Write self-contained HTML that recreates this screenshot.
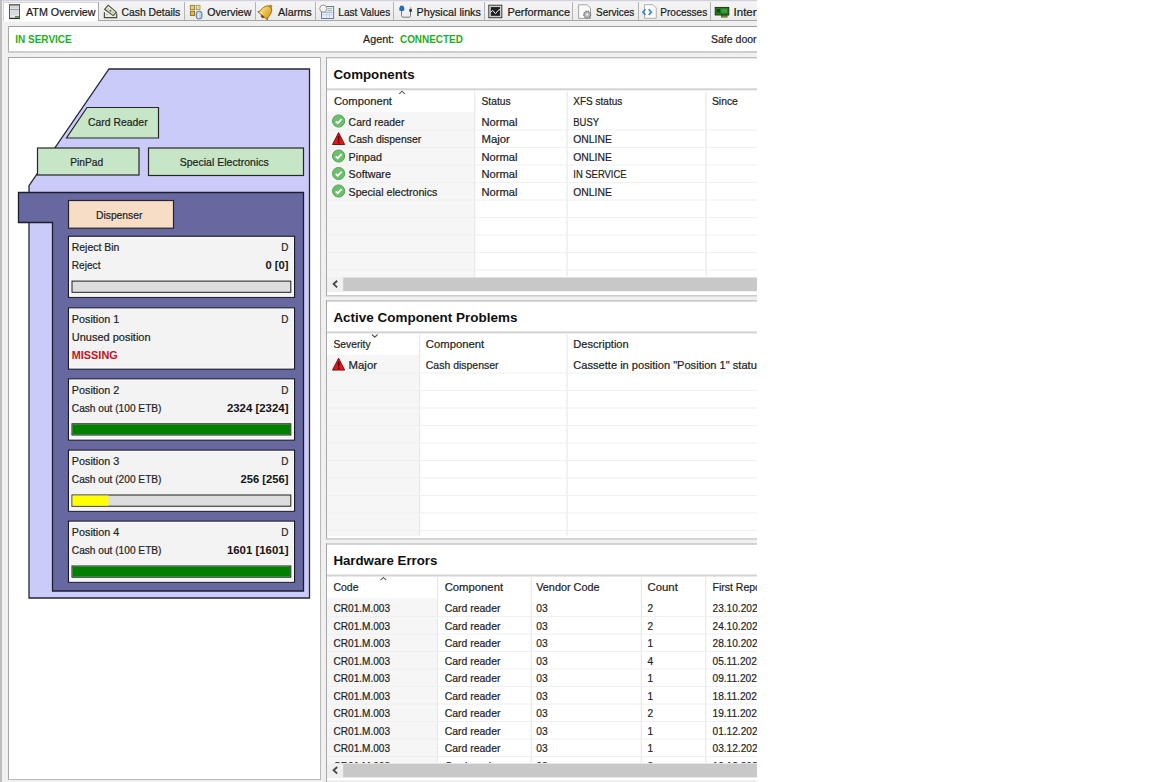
<!DOCTYPE html>
<html><head><meta charset="utf-8"><title>ATM Overview</title>
<style>
html,body{margin:0;padding:0;background:#fff}
body{width:1152px;height:782px;overflow:hidden;position:relative}
svg{position:absolute;left:0;top:0;display:block}
text{font-family:"Liberation Sans",sans-serif;white-space:pre}
</style></head><body>
<svg width="1152" height="782" viewBox="0 0 1152 782">
<defs>
<linearGradient id="bellg" x1="0" y1="0" x2="1" y2="0"><stop offset="0" stop-color="#ffe27a"/><stop offset="1" stop-color="#d9981c"/></linearGradient>
<linearGradient id="tabg" x1="0" y1="0" x2="0" y2="1"><stop offset="0" stop-color="#f5f5f5"/><stop offset="1" stop-color="#ebebeb"/></linearGradient>
<clipPath id="appclip"><rect x="0" y="0" width="757" height="782"/></clipPath>
</defs>
<g clip-path="url(#appclip)">
<rect x="0" y="0" width="1152" height="782" fill="#ffffff"/>
<rect x="0" y="0" width="757" height="782" fill="#f0f0f0"/>
<rect x="0" y="0" width="2" height="782" fill="#bebebe"/>
<rect x="2" y="0" width="755" height="1.5" fill="#d2d2dc"/>
<rect x="2" y="1.5" width="755" height="1" fill="#f8f8f8"/>
<rect x="98" y="2.5" width="659" height="18" fill="url(#tabg)"/>
<rect x="98" y="20" width="659" height="1" fill="#a5a5a5"/>
<rect x="3" y="2" width="96" height="19.5" fill="#ffffff"/>
<rect x="3" y="2" width="1" height="19" fill="#d6d6d6"/>
<rect x="3" y="2" width="96" height="1" fill="#d6d6d6"/>
<rect x="98" y="2" width="1" height="19" fill="#a8a8a8"/>
<rect x="184" y="2" width="1" height="18" fill="#b4b4b4"/>
<rect x="255" y="2" width="1" height="18" fill="#b4b4b4"/>
<rect x="315" y="2" width="1" height="18" fill="#b4b4b4"/>
<rect x="393" y="2" width="1" height="18" fill="#b4b4b4"/>
<rect x="484" y="2" width="1" height="18" fill="#b4b4b4"/>
<rect x="572" y="2" width="1" height="18" fill="#b4b4b4"/>
<rect x="638" y="2" width="1" height="18" fill="#b4b4b4"/>
<rect x="710" y="2" width="1" height="18" fill="#b4b4b4"/>
<text x="26.00" y="15.60" font-size="11.5" stroke="#1a1a1a" stroke-width="0.22" fill="#1a1a1a" textLength="69.50" lengthAdjust="spacingAndGlyphs">ATM Overview</text>
<text x="121.50" y="15.60" font-size="11.5" stroke="#1a1a1a" stroke-width="0.22" fill="#1a1a1a" textLength="58.80" lengthAdjust="spacingAndGlyphs">Cash Details</text>
<text x="207.20" y="15.60" font-size="11.5" stroke="#1a1a1a" stroke-width="0.22" fill="#1a1a1a" textLength="44.20" lengthAdjust="spacingAndGlyphs">Overview</text>
<text x="278.00" y="15.60" font-size="11.5" stroke="#1a1a1a" stroke-width="0.22" fill="#1a1a1a" textLength="33.70" lengthAdjust="spacingAndGlyphs">Alarms</text>
<text x="338.30" y="15.60" font-size="11.5" stroke="#1a1a1a" stroke-width="0.22" fill="#1a1a1a" textLength="51.90" lengthAdjust="spacingAndGlyphs">Last Values</text>
<text x="416.60" y="15.60" font-size="11.5" stroke="#1a1a1a" stroke-width="0.22" fill="#1a1a1a" textLength="64.20" lengthAdjust="spacingAndGlyphs">Physical links</text>
<text x="507.40" y="15.60" font-size="11.5" stroke="#1a1a1a" stroke-width="0.22" fill="#1a1a1a" textLength="62.70" lengthAdjust="spacingAndGlyphs">Performance</text>
<text x="596.00" y="15.60" font-size="11.5" stroke="#1a1a1a" stroke-width="0.22" fill="#1a1a1a" textLength="38.20" lengthAdjust="spacingAndGlyphs">Services</text>
<text x="660.30" y="15.60" font-size="11.5" stroke="#1a1a1a" stroke-width="0.22" fill="#1a1a1a" textLength="46.90" lengthAdjust="spacingAndGlyphs">Processes</text>
<text x="733.60" y="15.60" font-size="11.5" stroke="#1a1a1a" stroke-width="0.22" fill="#1a1a1a" textLength="50.47" lengthAdjust="spacingAndGlyphs">Interfaces</text>
<rect x="8" y="26" width="749" height="26" fill="#ffffff"/>
<rect x="8" y="26" width="749" height="1" fill="#a0a0a0"/>
<rect x="8" y="26" width="1" height="26.5" fill="#a8a8a8"/>
<rect x="8" y="51.2" width="749" height="1.5" fill="#c0c0c0"/>
<text x="15.20" y="42.90" font-size="11.5" font-weight="bold" fill="#1fae1f" textLength="56.60" lengthAdjust="spacingAndGlyphs">IN SERVICE</text>
<text x="363.10" y="43.00" font-size="11.5" stroke="#222" stroke-width="0.22" fill="#222" textLength="31.00" lengthAdjust="spacingAndGlyphs">Agent:</text>
<text x="400.00" y="43.00" font-size="11.5" font-weight="bold" fill="#1fae1f" textLength="62.80" lengthAdjust="spacingAndGlyphs">CONNECTED</text>
<text x="711.00" y="43.00" font-size="11.5" stroke="#222" stroke-width="0.22" fill="#222" textLength="45.60" lengthAdjust="spacingAndGlyphs">Safe door</text>
<rect x="8" y="57" width="313" height="723" fill="#ffffff"/>
<rect x="8" y="57" width="313" height="1" fill="#a8a8a8"/>
<rect x="8" y="57" width="1" height="723" fill="#a8a8a8"/>
<rect x="320" y="57" width="1" height="723" fill="#b8b8b8"/>
<rect x="8" y="779" width="313" height="1" fill="#b8b8b8"/>
<polygon points="109,69 309.5,69 309.5,598 29,598 29,185.6" fill="#cbcbf9" stroke="#262636" stroke-width="1.3"/>
<polygon points="18.5,192.5 303.5,192.5 303.5,591 52.5,591 52.5,222.5 18.5,222.5" fill="#6868a0" stroke="#1c1c30" stroke-width="1.3"/>
<polygon points="87,107.5 158.5,107.5 158.5,138 66.5,138" fill="#c7e6c7" stroke="#262626" stroke-width="1.2"/>
<text x="88.00" y="126.00" font-size="11.5" stroke="#1e1e1e" stroke-width="0.22" fill="#1e1e1e" textLength="59.60" lengthAdjust="spacingAndGlyphs">Card Reader</text>
<rect x="37.5" y="148" width="101.5" height="27" fill="#c7e6c7" stroke="#262626" stroke-width="1.2"/>
<text x="70.20" y="165.50" font-size="11.5" stroke="#1e1e1e" stroke-width="0.22" fill="#1e1e1e" textLength="33.00" lengthAdjust="spacingAndGlyphs">PinPad</text>
<rect x="148.5" y="148" width="155" height="27.5" fill="#c7e6c7" stroke="#262626" stroke-width="1.2"/>
<text x="179.70" y="165.50" font-size="11.5" stroke="#1e1e1e" stroke-width="0.22" fill="#1e1e1e" textLength="89.10" lengthAdjust="spacingAndGlyphs">Special Electronics</text>
<rect x="68.5" y="200.5" width="105" height="27.7" fill="#f7dcc6" stroke="#262626" stroke-width="1.2"/>
<text x="96.00" y="218.50" font-size="11.5" stroke="#1e1e1e" stroke-width="0.22" fill="#1e1e1e" textLength="46.40" lengthAdjust="spacingAndGlyphs">Dispenser</text>
<rect x="68.5" y="236.3" width="226" height="61" fill="#f3f3f3" stroke="#181826" stroke-width="1.2"/>
<rect x="69.6" y="237.4" width="223.8" height="58.8" fill="none" stroke="#fbfbfb" stroke-width="1"/>
<text x="71.80" y="250.90" font-size="11.5" stroke="#1e1e1e" stroke-width="0.22" fill="#1e1e1e" textLength="47.50" lengthAdjust="spacingAndGlyphs">Reject Bin</text>
<text x="288.50" y="250.90" font-size="11.5" stroke="#1e1e1e" stroke-width="0.22" fill="#1e1e1e" text-anchor="end" textLength="7.20" lengthAdjust="spacingAndGlyphs">D</text>
<text x="71.80" y="269.10" font-size="11.5" stroke="#1e1e1e" stroke-width="0.22" fill="#1e1e1e" textLength="28.70" lengthAdjust="spacingAndGlyphs">Reject</text>
<text x="288.50" y="269.10" font-size="11.5" font-weight="bold" fill="#141414" text-anchor="end" textLength="23.00" lengthAdjust="spacingAndGlyphs">0 [0]</text>
<rect x="72" y="281.1" width="218.8" height="11.2" fill="#dddddd" stroke="#1e1e1e" stroke-width="1"/>
<rect x="68.5" y="308.0" width="226" height="61" fill="#f3f3f3" stroke="#181826" stroke-width="1.2"/>
<rect x="69.6" y="309.1" width="223.8" height="58.8" fill="none" stroke="#fbfbfb" stroke-width="1"/>
<text x="71.80" y="322.60" font-size="11.5" stroke="#1e1e1e" stroke-width="0.22" fill="#1e1e1e" textLength="47.40" lengthAdjust="spacingAndGlyphs">Position 1</text>
<text x="288.50" y="322.60" font-size="11.5" stroke="#1e1e1e" stroke-width="0.22" fill="#1e1e1e" text-anchor="end" textLength="7.20" lengthAdjust="spacingAndGlyphs">D</text>
<text x="71.80" y="340.80" font-size="11.5" stroke="#1e1e1e" stroke-width="0.22" fill="#1e1e1e" textLength="78.80" lengthAdjust="spacingAndGlyphs">Unused position</text>
<text x="71.80" y="359.00" font-size="11.5" font-weight="bold" fill="#c4141c" textLength="45.90" lengthAdjust="spacingAndGlyphs">MISSING</text>
<rect x="68.5" y="379.0" width="226" height="61" fill="#f3f3f3" stroke="#181826" stroke-width="1.2"/>
<rect x="69.6" y="380.1" width="223.8" height="58.8" fill="none" stroke="#fbfbfb" stroke-width="1"/>
<text x="71.80" y="393.60" font-size="11.5" stroke="#1e1e1e" stroke-width="0.22" fill="#1e1e1e" textLength="47.40" lengthAdjust="spacingAndGlyphs">Position 2</text>
<text x="288.50" y="393.60" font-size="11.5" stroke="#1e1e1e" stroke-width="0.22" fill="#1e1e1e" text-anchor="end" textLength="7.20" lengthAdjust="spacingAndGlyphs">D</text>
<text x="71.80" y="411.80" font-size="11.5" stroke="#1e1e1e" stroke-width="0.22" fill="#1e1e1e" textLength="89.70" lengthAdjust="spacingAndGlyphs">Cash out (100 ETB)</text>
<text x="288.50" y="411.80" font-size="11.5" font-weight="bold" fill="#141414" text-anchor="end" textLength="61.60" lengthAdjust="spacingAndGlyphs">2324 [2324]</text>
<rect x="72" y="423.8" width="218.8" height="11.2" fill="#dddddd" stroke="#1e1e1e" stroke-width="1"/>
<rect x="72.5" y="424.3" width="217.8" height="10.2" fill="#007f00"/>
<rect x="68.5" y="450.2" width="226" height="61" fill="#f3f3f3" stroke="#181826" stroke-width="1.2"/>
<rect x="69.6" y="451.3" width="223.8" height="58.8" fill="none" stroke="#fbfbfb" stroke-width="1"/>
<text x="71.80" y="464.80" font-size="11.5" stroke="#1e1e1e" stroke-width="0.22" fill="#1e1e1e" textLength="47.40" lengthAdjust="spacingAndGlyphs">Position 3</text>
<text x="288.50" y="464.80" font-size="11.5" stroke="#1e1e1e" stroke-width="0.22" fill="#1e1e1e" text-anchor="end" textLength="7.20" lengthAdjust="spacingAndGlyphs">D</text>
<text x="71.80" y="483.00" font-size="11.5" stroke="#1e1e1e" stroke-width="0.22" fill="#1e1e1e" textLength="89.70" lengthAdjust="spacingAndGlyphs">Cash out (200 ETB)</text>
<text x="288.50" y="483.00" font-size="11.5" font-weight="bold" fill="#141414" text-anchor="end" textLength="48.00" lengthAdjust="spacingAndGlyphs">256 [256]</text>
<rect x="72" y="495.0" width="218.8" height="11.2" fill="#dddddd" stroke="#1e1e1e" stroke-width="1"/>
<rect x="72.5" y="495.5" width="35.9" height="10.2" fill="#ffff00"/>
<rect x="68.5" y="521.2" width="226" height="61" fill="#f3f3f3" stroke="#181826" stroke-width="1.2"/>
<rect x="69.6" y="522.3" width="223.8" height="58.8" fill="none" stroke="#fbfbfb" stroke-width="1"/>
<text x="71.80" y="535.80" font-size="11.5" stroke="#1e1e1e" stroke-width="0.22" fill="#1e1e1e" textLength="47.40" lengthAdjust="spacingAndGlyphs">Position 4</text>
<text x="288.50" y="535.80" font-size="11.5" stroke="#1e1e1e" stroke-width="0.22" fill="#1e1e1e" text-anchor="end" textLength="7.20" lengthAdjust="spacingAndGlyphs">D</text>
<text x="71.80" y="554.00" font-size="11.5" stroke="#1e1e1e" stroke-width="0.22" fill="#1e1e1e" textLength="89.70" lengthAdjust="spacingAndGlyphs">Cash out (100 ETB)</text>
<text x="288.50" y="554.00" font-size="11.5" font-weight="bold" fill="#141414" text-anchor="end" textLength="61.60" lengthAdjust="spacingAndGlyphs">1601 [1601]</text>
<rect x="72" y="566.0" width="218.8" height="11.2" fill="#dddddd" stroke="#1e1e1e" stroke-width="1"/>
<rect x="72.5" y="566.5" width="217.8" height="10.2" fill="#007f00"/>
<rect x="326" y="57.3" width="431" height="238.5" fill="#ffffff"/>
<rect x="326" y="57.3" width="431" height="1" fill="#a8a8a8"/>
<rect x="326" y="57.3" width="1" height="238.5" fill="#a8a8a8"/>
<rect x="326" y="295.3" width="431" height="1" fill="#b4b4b4"/>
<text x="333.40" y="79.00" font-size="13.4" font-weight="bold" fill="#0f0f0f" textLength="81.30" lengthAdjust="spacingAndGlyphs">Components</text>
<rect x="327" y="88.3" width="430" height="2" fill="#d2d2d2"/>
<rect x="327" y="111.8" width="147.5" height="165" fill="#f6f6f6"/>
<text x="334.00" y="105.00" font-size="11.5" stroke="#1e1e1e" stroke-width="0.22" fill="#1e1e1e" textLength="58.00" lengthAdjust="spacingAndGlyphs">Component</text>
<rect x="474.09999999999997" y="91.3" width="1.2" height="185" fill="#e8e8e8"/>
<text x="481.50" y="105.00" font-size="11.5" stroke="#1e1e1e" stroke-width="0.22" fill="#1e1e1e" textLength="29.10" lengthAdjust="spacingAndGlyphs">Status</text>
<rect x="566.4" y="91.3" width="1.2" height="185" fill="#e8e8e8"/>
<text x="573.30" y="105.00" font-size="11.5" stroke="#1e1e1e" stroke-width="0.22" fill="#1e1e1e" textLength="49.00" lengthAdjust="spacingAndGlyphs">XFS status</text>
<rect x="705.4" y="91.3" width="1.2" height="185" fill="#e8e8e8"/>
<text x="711.90" y="105.00" font-size="11.5" stroke="#1e1e1e" stroke-width="0.22" fill="#1e1e1e" textLength="26.00" lengthAdjust="spacingAndGlyphs">Since</text>
<polyline points="399.2,93.9 402.0,91.2 404.8,93.9" fill="none" stroke="#5a5a5a" stroke-width="1.1"/>
<rect x="327" y="129.5" width="430" height="1" fill="#f0f0f0"/>
<rect x="327" y="147.0" width="430" height="1" fill="#f0f0f0"/>
<rect x="327" y="164.5" width="430" height="1" fill="#f0f0f0"/>
<rect x="327" y="182.0" width="430" height="1" fill="#f0f0f0"/>
<rect x="327" y="199.5" width="430" height="1" fill="#f0f0f0"/>
<rect x="327" y="217.0" width="430" height="1" fill="#f0f0f0"/>
<rect x="327" y="234.5" width="430" height="1" fill="#f0f0f0"/>
<rect x="327" y="252.0" width="430" height="1" fill="#f0f0f0"/>
<rect x="327" y="269.5" width="430" height="1" fill="#f0f0f0"/>
<circle cx="338.6" cy="121.0" r="6.1" fill="#6cc06c" stroke="#4a9e4a" stroke-width="0.9"/>
<polyline points="335.7,121.3 337.7,123.2 341.7,119.1" fill="none" stroke="#ffffff" stroke-width="1.7"/>
<text x="348.60" y="125.90" font-size="11.5" stroke="#1e1e1e" stroke-width="0.22" fill="#1e1e1e" textLength="55.80" lengthAdjust="spacingAndGlyphs">Card reader</text>
<text x="481.50" y="125.90" font-size="11.5" stroke="#1e1e1e" stroke-width="0.22" fill="#1e1e1e" textLength="36.00" lengthAdjust="spacingAndGlyphs">Normal</text>
<text x="573.30" y="125.90" font-size="11.5" stroke="#1e1e1e" stroke-width="0.22" fill="#1e1e1e" textLength="25.70" lengthAdjust="spacingAndGlyphs">BUSY</text>
<polygon points="338.6,132.6 344.7,144.5 332.5,144.5" fill="#e4141a" stroke="#6a0808" stroke-width="0.9" stroke-linejoin="round"/>
<rect x="337.9" y="136.2" width="1.5" height="4.6" fill="#3a0000"/>
<rect x="337.9" y="141.8" width="1.5" height="1.5" fill="#3a0000"/>
<text x="348.60" y="143.40" font-size="11.5" stroke="#1e1e1e" stroke-width="0.22" fill="#1e1e1e" textLength="72.70" lengthAdjust="spacingAndGlyphs">Cash dispenser</text>
<text x="481.50" y="143.40" font-size="11.5" stroke="#1e1e1e" stroke-width="0.22" fill="#1e1e1e" textLength="28.40" lengthAdjust="spacingAndGlyphs">Major</text>
<text x="573.30" y="143.40" font-size="11.5" stroke="#1e1e1e" stroke-width="0.22" fill="#1e1e1e" textLength="38.60" lengthAdjust="spacingAndGlyphs">ONLINE</text>
<circle cx="338.6" cy="156.0" r="6.1" fill="#6cc06c" stroke="#4a9e4a" stroke-width="0.9"/>
<polyline points="335.7,156.3 337.7,158.2 341.7,154.1" fill="none" stroke="#ffffff" stroke-width="1.7"/>
<text x="348.60" y="160.90" font-size="11.5" stroke="#1e1e1e" stroke-width="0.22" fill="#1e1e1e" textLength="33.40" lengthAdjust="spacingAndGlyphs">Pinpad</text>
<text x="481.50" y="160.90" font-size="11.5" stroke="#1e1e1e" stroke-width="0.22" fill="#1e1e1e" textLength="36.00" lengthAdjust="spacingAndGlyphs">Normal</text>
<text x="573.30" y="160.90" font-size="11.5" stroke="#1e1e1e" stroke-width="0.22" fill="#1e1e1e" textLength="38.60" lengthAdjust="spacingAndGlyphs">ONLINE</text>
<circle cx="338.6" cy="173.5" r="6.1" fill="#6cc06c" stroke="#4a9e4a" stroke-width="0.9"/>
<polyline points="335.7,173.8 337.7,175.7 341.7,171.6" fill="none" stroke="#ffffff" stroke-width="1.7"/>
<text x="348.60" y="178.40" font-size="11.5" stroke="#1e1e1e" stroke-width="0.22" fill="#1e1e1e" textLength="42.30" lengthAdjust="spacingAndGlyphs">Software</text>
<text x="481.50" y="178.40" font-size="11.5" stroke="#1e1e1e" stroke-width="0.22" fill="#1e1e1e" textLength="36.00" lengthAdjust="spacingAndGlyphs">Normal</text>
<text x="573.30" y="178.40" font-size="11.5" stroke="#1e1e1e" stroke-width="0.22" fill="#1e1e1e" textLength="53.20" lengthAdjust="spacingAndGlyphs">IN SERVICE</text>
<circle cx="338.6" cy="191.0" r="6.1" fill="#6cc06c" stroke="#4a9e4a" stroke-width="0.9"/>
<polyline points="335.7,191.3 337.7,193.2 341.7,189.1" fill="none" stroke="#ffffff" stroke-width="1.7"/>
<text x="348.60" y="195.90" font-size="11.5" stroke="#1e1e1e" stroke-width="0.22" fill="#1e1e1e" textLength="88.80" lengthAdjust="spacingAndGlyphs">Special electronics</text>
<text x="481.50" y="195.90" font-size="11.5" stroke="#1e1e1e" stroke-width="0.22" fill="#1e1e1e" textLength="36.00" lengthAdjust="spacingAndGlyphs">Normal</text>
<text x="573.30" y="195.90" font-size="11.5" stroke="#1e1e1e" stroke-width="0.22" fill="#1e1e1e" textLength="38.60" lengthAdjust="spacingAndGlyphs">ONLINE</text>
<rect x="327" y="276.9" width="430" height="15" fill="#f0f0f0"/>
<rect x="343.2" y="277.59999999999997" width="413.8" height="13.4" fill="#c8c8c8"/>
<polyline points="337.2,280.8 333.6,284.1 337.2,287.4" fill="none" stroke="#4a4a4a" stroke-width="1.9"/>
<rect x="326" y="300.4" width="431" height="238.5" fill="#ffffff"/>
<rect x="326" y="300.4" width="431" height="1" fill="#a8a8a8"/>
<rect x="326" y="300.4" width="1" height="238.5" fill="#a8a8a8"/>
<rect x="326" y="538.4" width="431" height="1" fill="#b4b4b4"/>
<text x="333.40" y="322.10" font-size="13.4" font-weight="bold" fill="#0f0f0f" textLength="184.00" lengthAdjust="spacingAndGlyphs">Active Component Problems</text>
<rect x="327" y="331.4" width="430" height="2" fill="#d2d2d2"/>
<rect x="327" y="354.9" width="92.5" height="181.0" fill="#f6f6f6"/>
<text x="333.50" y="348.10" font-size="11.5" stroke="#1e1e1e" stroke-width="0.22" fill="#1e1e1e" textLength="37.10" lengthAdjust="spacingAndGlyphs">Severity</text>
<rect x="419.0" y="334.4" width="1.2" height="201.5" fill="#e8e8e8"/>
<text x="425.80" y="348.10" font-size="11.5" stroke="#1e1e1e" stroke-width="0.22" fill="#1e1e1e" textLength="58.40" lengthAdjust="spacingAndGlyphs">Component</text>
<rect x="566.4" y="334.4" width="1.2" height="201.5" fill="#e8e8e8"/>
<text x="573.30" y="348.10" font-size="11.5" stroke="#1e1e1e" stroke-width="0.22" fill="#1e1e1e" textLength="55.40" lengthAdjust="spacingAndGlyphs">Description</text>
<polyline points="372.0,334.5 374.8,337.2 377.6,334.5" fill="none" stroke="#5a5a5a" stroke-width="1.1"/>
<rect x="327" y="372.5" width="430" height="1" fill="#f0f0f0"/>
<rect x="327" y="390.0" width="430" height="1" fill="#f0f0f0"/>
<rect x="327" y="407.5" width="430" height="1" fill="#f0f0f0"/>
<rect x="327" y="425.0" width="430" height="1" fill="#f0f0f0"/>
<rect x="327" y="442.5" width="430" height="1" fill="#f0f0f0"/>
<rect x="327" y="460.0" width="430" height="1" fill="#f0f0f0"/>
<rect x="327" y="477.5" width="430" height="1" fill="#f0f0f0"/>
<rect x="327" y="495.0" width="430" height="1" fill="#f0f0f0"/>
<rect x="327" y="512.5" width="430" height="1" fill="#f0f0f0"/>
<rect x="327" y="530.0" width="430" height="1" fill="#f0f0f0"/>
<polygon points="338.6,358.2 344.7,370.1 332.5,370.1" fill="#e4141a" stroke="#6a0808" stroke-width="0.9" stroke-linejoin="round"/>
<rect x="337.9" y="361.8" width="1.5" height="4.6" fill="#3a0000"/>
<rect x="337.9" y="367.4" width="1.5" height="1.5" fill="#3a0000"/>
<text x="348.60" y="369.00" font-size="11.5" stroke="#1e1e1e" stroke-width="0.22" fill="#1e1e1e" textLength="28.40" lengthAdjust="spacingAndGlyphs">Major</text>
<text x="425.80" y="369.00" font-size="11.5" stroke="#1e1e1e" stroke-width="0.22" fill="#1e1e1e" textLength="72.70" lengthAdjust="spacingAndGlyphs">Cash dispenser</text>
<text x="573.30" y="369.00" font-size="11.5" stroke="#1e1e1e" stroke-width="0.22" fill="#1e1e1e" textLength="234.66" lengthAdjust="spacingAndGlyphs">Cassette in position &quot;Position 1&quot; status changed</text>
<rect x="326" y="543.5" width="431" height="236.5" fill="#ffffff"/>
<rect x="326" y="543.5" width="431" height="1" fill="#a8a8a8"/>
<rect x="326" y="543.5" width="1" height="238.5" fill="#a8a8a8"/>
<text x="333.40" y="565.20" font-size="13.4" font-weight="bold" fill="#0f0f0f" textLength="104.00" lengthAdjust="spacingAndGlyphs">Hardware Errors</text>
<rect x="327" y="574.5" width="430" height="2" fill="#d2d2d2"/>
<rect x="327" y="598.0" width="110.5" height="165" fill="#f6f6f6"/>
<text x="333.50" y="591.20" font-size="11.5" stroke="#1e1e1e" stroke-width="0.22" fill="#1e1e1e" textLength="25.00" lengthAdjust="spacingAndGlyphs">Code</text>
<rect x="436.9" y="577.5" width="1.2" height="185" fill="#e8e8e8"/>
<text x="444.70" y="591.20" font-size="11.5" stroke="#1e1e1e" stroke-width="0.22" fill="#1e1e1e" textLength="58.40" lengthAdjust="spacingAndGlyphs">Component</text>
<rect x="530.6999999999999" y="577.5" width="1.2" height="185" fill="#e8e8e8"/>
<text x="536.20" y="591.20" font-size="11.5" stroke="#1e1e1e" stroke-width="0.22" fill="#1e1e1e" textLength="63.40" lengthAdjust="spacingAndGlyphs">Vendor Code</text>
<rect x="640.8" y="577.5" width="1.2" height="185" fill="#e8e8e8"/>
<text x="647.50" y="591.20" font-size="11.5" stroke="#1e1e1e" stroke-width="0.22" fill="#1e1e1e" textLength="30.30" lengthAdjust="spacingAndGlyphs">Count</text>
<rect x="705.1" y="577.5" width="1.2" height="185" fill="#e8e8e8"/>
<text x="712.50" y="591.20" font-size="11.5" stroke="#1e1e1e" stroke-width="0.22" fill="#1e1e1e" textLength="66.55" lengthAdjust="spacingAndGlyphs">First Reported</text>
<polyline points="380.6,580.1 383.4,577.4 386.2,580.1" fill="none" stroke="#5a5a5a" stroke-width="1.1"/>
<rect x="327" y="616.0" width="430" height="1" fill="#f0f0f0"/>
<rect x="327" y="633.5" width="430" height="1" fill="#f0f0f0"/>
<rect x="327" y="651.0" width="430" height="1" fill="#f0f0f0"/>
<rect x="327" y="668.5" width="430" height="1" fill="#f0f0f0"/>
<rect x="327" y="686.0" width="430" height="1" fill="#f0f0f0"/>
<rect x="327" y="703.5" width="430" height="1" fill="#f0f0f0"/>
<rect x="327" y="721.0" width="430" height="1" fill="#f0f0f0"/>
<rect x="327" y="738.5" width="430" height="1" fill="#f0f0f0"/>
<rect x="327" y="756.0" width="430" height="1" fill="#f0f0f0"/>
<text x="333.50" y="612.10" font-size="11.5" stroke="#1e1e1e" stroke-width="0.22" fill="#1e1e1e" textLength="56.50" lengthAdjust="spacingAndGlyphs">CR01.M.003</text>
<text x="444.70" y="612.10" font-size="11.5" stroke="#1e1e1e" stroke-width="0.22" fill="#1e1e1e" textLength="55.80" lengthAdjust="spacingAndGlyphs">Card reader</text>
<text x="536.20" y="612.10" font-size="11.5" stroke="#1e1e1e" stroke-width="0.22" fill="#1e1e1e" textLength="11.40" lengthAdjust="spacingAndGlyphs">03</text>
<text x="647.50" y="612.10" font-size="11.5" stroke="#1e1e1e" stroke-width="0.22" fill="#1e1e1e" textLength="5.63" lengthAdjust="spacingAndGlyphs">2</text>
<text x="712.50" y="612.10" font-size="11.5" stroke="#1e1e1e" stroke-width="0.22" fill="#1e1e1e" textLength="50.64" lengthAdjust="spacingAndGlyphs">23.10.2023</text>
<text x="333.50" y="629.60" font-size="11.5" stroke="#1e1e1e" stroke-width="0.22" fill="#1e1e1e" textLength="56.50" lengthAdjust="spacingAndGlyphs">CR01.M.003</text>
<text x="444.70" y="629.60" font-size="11.5" stroke="#1e1e1e" stroke-width="0.22" fill="#1e1e1e" textLength="55.80" lengthAdjust="spacingAndGlyphs">Card reader</text>
<text x="536.20" y="629.60" font-size="11.5" stroke="#1e1e1e" stroke-width="0.22" fill="#1e1e1e" textLength="11.40" lengthAdjust="spacingAndGlyphs">03</text>
<text x="647.50" y="629.60" font-size="11.5" stroke="#1e1e1e" stroke-width="0.22" fill="#1e1e1e" textLength="5.63" lengthAdjust="spacingAndGlyphs">2</text>
<text x="712.50" y="629.60" font-size="11.5" stroke="#1e1e1e" stroke-width="0.22" fill="#1e1e1e" textLength="50.64" lengthAdjust="spacingAndGlyphs">24.10.2023</text>
<text x="333.50" y="647.10" font-size="11.5" stroke="#1e1e1e" stroke-width="0.22" fill="#1e1e1e" textLength="56.50" lengthAdjust="spacingAndGlyphs">CR01.M.003</text>
<text x="444.70" y="647.10" font-size="11.5" stroke="#1e1e1e" stroke-width="0.22" fill="#1e1e1e" textLength="55.80" lengthAdjust="spacingAndGlyphs">Card reader</text>
<text x="536.20" y="647.10" font-size="11.5" stroke="#1e1e1e" stroke-width="0.22" fill="#1e1e1e" textLength="11.40" lengthAdjust="spacingAndGlyphs">03</text>
<text x="647.50" y="647.10" font-size="11.5" stroke="#1e1e1e" stroke-width="0.22" fill="#1e1e1e" textLength="5.63" lengthAdjust="spacingAndGlyphs">1</text>
<text x="712.50" y="647.10" font-size="11.5" stroke="#1e1e1e" stroke-width="0.22" fill="#1e1e1e" textLength="50.64" lengthAdjust="spacingAndGlyphs">28.10.2023</text>
<text x="333.50" y="664.60" font-size="11.5" stroke="#1e1e1e" stroke-width="0.22" fill="#1e1e1e" textLength="56.50" lengthAdjust="spacingAndGlyphs">CR01.M.003</text>
<text x="444.70" y="664.60" font-size="11.5" stroke="#1e1e1e" stroke-width="0.22" fill="#1e1e1e" textLength="55.80" lengthAdjust="spacingAndGlyphs">Card reader</text>
<text x="536.20" y="664.60" font-size="11.5" stroke="#1e1e1e" stroke-width="0.22" fill="#1e1e1e" textLength="11.40" lengthAdjust="spacingAndGlyphs">03</text>
<text x="647.50" y="664.60" font-size="11.5" stroke="#1e1e1e" stroke-width="0.22" fill="#1e1e1e" textLength="5.63" lengthAdjust="spacingAndGlyphs">4</text>
<text x="712.50" y="664.60" font-size="11.5" stroke="#1e1e1e" stroke-width="0.22" fill="#1e1e1e" textLength="49.89" lengthAdjust="spacingAndGlyphs">05.11.2023</text>
<text x="333.50" y="682.10" font-size="11.5" stroke="#1e1e1e" stroke-width="0.22" fill="#1e1e1e" textLength="56.50" lengthAdjust="spacingAndGlyphs">CR01.M.003</text>
<text x="444.70" y="682.10" font-size="11.5" stroke="#1e1e1e" stroke-width="0.22" fill="#1e1e1e" textLength="55.80" lengthAdjust="spacingAndGlyphs">Card reader</text>
<text x="536.20" y="682.10" font-size="11.5" stroke="#1e1e1e" stroke-width="0.22" fill="#1e1e1e" textLength="11.40" lengthAdjust="spacingAndGlyphs">03</text>
<text x="647.50" y="682.10" font-size="11.5" stroke="#1e1e1e" stroke-width="0.22" fill="#1e1e1e" textLength="5.63" lengthAdjust="spacingAndGlyphs">1</text>
<text x="712.50" y="682.10" font-size="11.5" stroke="#1e1e1e" stroke-width="0.22" fill="#1e1e1e" textLength="49.89" lengthAdjust="spacingAndGlyphs">09.11.2023</text>
<text x="333.50" y="699.60" font-size="11.5" stroke="#1e1e1e" stroke-width="0.22" fill="#1e1e1e" textLength="56.50" lengthAdjust="spacingAndGlyphs">CR01.M.003</text>
<text x="444.70" y="699.60" font-size="11.5" stroke="#1e1e1e" stroke-width="0.22" fill="#1e1e1e" textLength="55.80" lengthAdjust="spacingAndGlyphs">Card reader</text>
<text x="536.20" y="699.60" font-size="11.5" stroke="#1e1e1e" stroke-width="0.22" fill="#1e1e1e" textLength="11.40" lengthAdjust="spacingAndGlyphs">03</text>
<text x="647.50" y="699.60" font-size="11.5" stroke="#1e1e1e" stroke-width="0.22" fill="#1e1e1e" textLength="5.63" lengthAdjust="spacingAndGlyphs">1</text>
<text x="712.50" y="699.60" font-size="11.5" stroke="#1e1e1e" stroke-width="0.22" fill="#1e1e1e" textLength="49.89" lengthAdjust="spacingAndGlyphs">18.11.2023</text>
<text x="333.50" y="717.10" font-size="11.5" stroke="#1e1e1e" stroke-width="0.22" fill="#1e1e1e" textLength="56.50" lengthAdjust="spacingAndGlyphs">CR01.M.003</text>
<text x="444.70" y="717.10" font-size="11.5" stroke="#1e1e1e" stroke-width="0.22" fill="#1e1e1e" textLength="55.80" lengthAdjust="spacingAndGlyphs">Card reader</text>
<text x="536.20" y="717.10" font-size="11.5" stroke="#1e1e1e" stroke-width="0.22" fill="#1e1e1e" textLength="11.40" lengthAdjust="spacingAndGlyphs">03</text>
<text x="647.50" y="717.10" font-size="11.5" stroke="#1e1e1e" stroke-width="0.22" fill="#1e1e1e" textLength="5.63" lengthAdjust="spacingAndGlyphs">2</text>
<text x="712.50" y="717.10" font-size="11.5" stroke="#1e1e1e" stroke-width="0.22" fill="#1e1e1e" textLength="49.89" lengthAdjust="spacingAndGlyphs">19.11.2023</text>
<text x="333.50" y="734.60" font-size="11.5" stroke="#1e1e1e" stroke-width="0.22" fill="#1e1e1e" textLength="56.50" lengthAdjust="spacingAndGlyphs">CR01.M.003</text>
<text x="444.70" y="734.60" font-size="11.5" stroke="#1e1e1e" stroke-width="0.22" fill="#1e1e1e" textLength="55.80" lengthAdjust="spacingAndGlyphs">Card reader</text>
<text x="536.20" y="734.60" font-size="11.5" stroke="#1e1e1e" stroke-width="0.22" fill="#1e1e1e" textLength="11.40" lengthAdjust="spacingAndGlyphs">03</text>
<text x="647.50" y="734.60" font-size="11.5" stroke="#1e1e1e" stroke-width="0.22" fill="#1e1e1e" textLength="5.63" lengthAdjust="spacingAndGlyphs">1</text>
<text x="712.50" y="734.60" font-size="11.5" stroke="#1e1e1e" stroke-width="0.22" fill="#1e1e1e" textLength="50.64" lengthAdjust="spacingAndGlyphs">01.12.2023</text>
<text x="333.50" y="752.10" font-size="11.5" stroke="#1e1e1e" stroke-width="0.22" fill="#1e1e1e" textLength="56.50" lengthAdjust="spacingAndGlyphs">CR01.M.003</text>
<text x="444.70" y="752.10" font-size="11.5" stroke="#1e1e1e" stroke-width="0.22" fill="#1e1e1e" textLength="55.80" lengthAdjust="spacingAndGlyphs">Card reader</text>
<text x="536.20" y="752.10" font-size="11.5" stroke="#1e1e1e" stroke-width="0.22" fill="#1e1e1e" textLength="11.40" lengthAdjust="spacingAndGlyphs">03</text>
<text x="647.50" y="752.10" font-size="11.5" stroke="#1e1e1e" stroke-width="0.22" fill="#1e1e1e" textLength="5.63" lengthAdjust="spacingAndGlyphs">1</text>
<text x="712.50" y="752.10" font-size="11.5" stroke="#1e1e1e" stroke-width="0.22" fill="#1e1e1e" textLength="50.64" lengthAdjust="spacingAndGlyphs">03.12.2023</text>
<text x="333.50" y="769.60" font-size="11.5" stroke="#1e1e1e" stroke-width="0.22" fill="#1e1e1e" textLength="56.50" lengthAdjust="spacingAndGlyphs">CR01.M.003</text>
<text x="444.70" y="769.60" font-size="11.5" stroke="#1e1e1e" stroke-width="0.22" fill="#1e1e1e" textLength="55.80" lengthAdjust="spacingAndGlyphs">Card reader</text>
<text x="536.20" y="769.60" font-size="11.5" stroke="#1e1e1e" stroke-width="0.22" fill="#1e1e1e" textLength="11.40" lengthAdjust="spacingAndGlyphs">03</text>
<text x="647.50" y="769.60" font-size="11.5" stroke="#1e1e1e" stroke-width="0.22" fill="#1e1e1e" textLength="5.63" lengthAdjust="spacingAndGlyphs">3</text>
<text x="712.50" y="769.60" font-size="11.5" stroke="#1e1e1e" stroke-width="0.22" fill="#1e1e1e" textLength="50.64" lengthAdjust="spacingAndGlyphs">10.12.2023</text>
<rect x="327" y="763.1" width="430" height="15" fill="#f0f0f0"/>
<rect x="343.2" y="763.8000000000001" width="413.8" height="13.4" fill="#c8c8c8"/>
<polyline points="337.2,767.0 333.6,770.3 337.2,773.6" fill="none" stroke="#4a4a4a" stroke-width="1.9"/>

<g>
 <!-- ATM overview -->
 <rect x="9.5" y="4.6" width="10" height="14" fill="#e4e8e8" stroke="#5a5a5a" stroke-width="1"/>
 <rect x="10" y="5" width="9" height="1.2" fill="#9a9a9a"/>
 <rect x="10.5" y="7.3" width="8" height="0.8" fill="#c8ccd4"/>
 <rect x="10" y="9.2" width="9" height="0.9" fill="#8c8c96"/>
 <rect x="10.5" y="11.5" width="8" height="0.8" fill="#c4c8c8"/>
 <rect x="10.5" y="13.6" width="8" height="0.8" fill="#c4c8c8"/>
 <rect x="15" y="16" width="4" height="1.6" fill="#3ca03c"/>
 <rect x="9.5" y="17.8" width="10" height="1.2" fill="#2e2e2e"/>
 <!-- cash details -->
 <path d="M104.4,12.2 L104.4,17.6 L116.7,17.6 L116.7,13.4" fill="#eceee0" stroke="#4a4c3c" stroke-width="1.2"/>
 <path d="M108.1,5.2 L116.4,12.2 L113.3,15.6 L104.6,9.3 Z" fill="#e6e8d6" stroke="#4a4c3c" stroke-width="1.1"/>
 <circle cx="110.5" cy="10.7" r="1" fill="#5e624a"/>
 <circle cx="108.2" cy="9" r="0.6" fill="#8a8e70"/>
 <circle cx="113" cy="12.4" r="0.6" fill="#8a8e70"/>
 <circle cx="107" cy="14.5" r="0.8" fill="#a8ac90"/>
 <!-- overview -->
 <rect x="190.3" y="5.3" width="4.3" height="4.3" fill="#e2cf78" stroke="#8a7a30" stroke-width="0.8"/>
 <rect x="196.2" y="5.3" width="3.8" height="4.3" fill="#f0dc98" stroke="#a89050" stroke-width="0.8"/>
 <rect x="190.3" y="11.2" width="4.3" height="4.3" fill="#e8b840" stroke="#7a6020" stroke-width="0.8"/>
 <rect x="196.3" y="11.3" width="5.6" height="7.5" rx="2.2" fill="#b8d0f0" stroke="#5a7098" stroke-width="1"/>
 <rect x="197.8" y="12.5" width="1.4" height="5.4" fill="#e0f0ff"/>
 <!-- alarms bell -->
 <g transform="translate(266.4,11.4) rotate(40)">
  <path d="M-5.2,4.2 C-5.4,-1.2 -3.8,-6 0,-6 C3.8,-6 5.4,-1.2 5.2,4.2 L6.4,5.8 L-6.4,5.8 Z" fill="url(#bellg)" stroke="#8e6a10" stroke-width="0.9" stroke-linejoin="round"/>
  <circle cx="0" cy="-6.6" r="1.3" fill="#c8a030" stroke="#7a5a10" stroke-width="0.5"/>
  <ellipse cx="0.3" cy="6.6" rx="1.9" ry="1.1" fill="#6a4a10"/>
  <ellipse cx="-2.8" cy="4.2" rx="1.3" ry="0.9" fill="#fff2b8"/>
 </g>
 <!-- last values -->
 <rect x="321.6" y="6.5" width="12" height="12" fill="#e8f2ff" stroke="#6a78a8" stroke-width="1"/>
 <rect x="327.5" y="8.3" width="4.5" height="0.9" fill="#8cb070"/>
 <rect x="327.5" y="10.3" width="4.5" height="0.9" fill="#8cb070"/>
 <rect x="322.5" y="12.3" width="10" height="0.7" fill="#98a8c8"/>
 <rect x="322.5" y="14.5" width="10" height="0.7" fill="#b8c4dc"/>
 <rect x="326" y="12.3" width="0.7" height="5.5" fill="#b8c4dc"/>
 <rect x="329" y="12.3" width="0.7" height="5.5" fill="#b8c4dc"/>
 <circle cx="323.3" cy="8.6" r="3.6" fill="#f4f4f4" stroke="#9a9a9a" stroke-width="1"/>
 <!-- physical links -->
 <rect x="400.2" y="5.8" width="3.2" height="1" fill="#303030"/>
 <rect x="399.3" y="6.5" width="5" height="4.6" rx="1.6" fill="#1a6fc0"/>
 <path d="M401.5,11 L401.5,15.7 Q401.7,17.2 403.2,17.2 L409.5,17.2 Q410.5,17.2 410.5,15.8 L410.5,11" fill="none" stroke="#7a7a7a" stroke-width="1"/>
 <rect x="409.3" y="8.8" width="2.6" height="3.3" rx="1" fill="#383838"/>
 <rect x="410" y="7.3" width="1.2" height="1.6" fill="#8a9aa8"/>
 <!-- performance -->
 <rect x="488.8" y="5.2" width="13" height="12.5" fill="#d8d8d8" stroke="#3a3a3a" stroke-width="1"/>
 <rect x="490.3" y="6.7" width="10" height="9.5" fill="#202020" stroke="#e8e8e8" stroke-width="0.7"/>
 <polyline points="490.5,12.5 492.8,10.4 495.5,13.8 498,10.5 500.3,9.3" fill="none" stroke="#e8e8e8" stroke-width="1"/>
 <!-- services -->
 <path d="M578.6,4.8 L587.4,4.8 L590.5,8 L590.5,18.4 L578.6,18.4 Z" fill="#fafafa" stroke="#9a9a9a" stroke-width="0.9"/>
 <circle cx="587.2" cy="14.6" r="3.4" fill="#b8b8b8" stroke="#707070" stroke-width="1.4" stroke-dasharray="1.3 1"/>
 <circle cx="587.2" cy="14.6" r="1.1" fill="#f0f0f0"/>
 <!-- processes -->
 <path d="M644.5,4.6 L653,4.6 L656.3,8 L656.3,18.3 L644.5,18.3 Z" fill="#fbfbfb" stroke="#a8a8a8" stroke-width="0.9"/>
 <polyline points="645.4,9.3 643,12.2 645.4,15" fill="none" stroke="#3a88d0" stroke-width="1.8"/>
 <polyline points="648.8,9.3 651.2,12.2 648.8,15" fill="none" stroke="#3a88d0" stroke-width="1.8"/>
 <!-- interfaces -->
 <rect x="715.2" y="7.4" width="13.6" height="7.6" fill="#1f7f1f" stroke="#1a2a1a" stroke-width="0.9"/>
 <rect x="716.8" y="9" width="3.2" height="3.5" fill="#0a4a0a"/>
 <rect x="721.5" y="8.8" width="5.5" height="4" fill="#3aa03a"/>
 <rect x="721.5" y="15.3" width="5.6" height="1.8" fill="#8aa030" stroke="#2a3a10" stroke-width="0.6"/>
</g>

</g>
</svg>
</body></html>
